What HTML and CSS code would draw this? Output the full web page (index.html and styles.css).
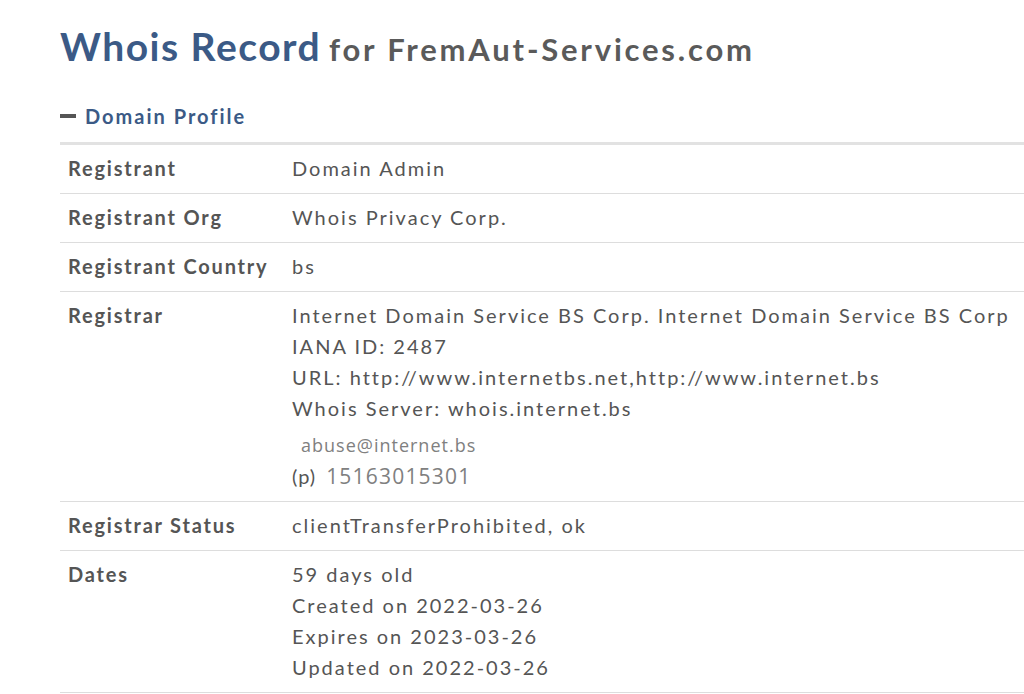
FILE: index.html
```html
<!DOCTYPE html>
<html lang="en">
<head>
<meta charset="utf-8">
<title>Whois Record for FremAut-Services.com</title>
<link rel="stylesheet" href="styles.css">
</head>
<body>
<div class="page">
  <h1 class="title"><span class="title-main">Whois Record</span> <span class="title-sub">for FremAut-Services.com</span></h1>
  <h2 class="section"><span class="minus"></span>Domain Profile</h2>
  <table class="profile">
    <tr><th>Registrant</th><td>Domain Admin</td></tr>
    <tr><th>Registrant Org</th><td>Whois Privacy Corp.</td></tr>
    <tr><th>Registrant Country</th><td>bs</td></tr>
    <tr><th>Registrar</th><td>
      <div>Internet Domain Service BS Corp. Internet Domain Service BS Corp</div>
      <div>IANA ID: 2487</div>
      <div>URL: http://www.internetbs.net,http://www.internet.bs</div>
      <div>Whois Server: whois.internet.bs</div>
      <div class="contact email">abuse@internet.bs</div>
      <div class="contact-row"><span class="p">(p)</span><span class="contact phone">15163015301</span></div>
    </td></tr>
    <tr><th>Registrar Status</th><td>clientTransferProhibited, ok</td></tr>
    <tr><th>Dates</th><td>
      <div>59 days old</div>
      <div>Created on 2022-03-26</div>
      <div>Expires on 2023-03-26</div>
      <div>Updated on 2022-03-26</div>
    </td></tr>
  </table>
</div>
</body>
</html>
```
FILE: styles.css
```css
html, body {
  margin: 0;
  padding: 0;
  background: #fff;
}
body {
  font-family: Lato, "Liberation Sans", sans-serif;
  color: #555;
}
.page {
  padding: 20px 0 0 60px;
}
.title {
  margin: 0;
  font-weight: 700;
  line-height: 52px;
  white-space: nowrap;
}
.title-main {
  font-size: 39px;
  letter-spacing: 1.5px;
  color: #3b5a86;
}
.title-sub {
  font-size: 31px;
  letter-spacing: 2.8px;
  color: #5a5a5a;
}
.section {
  margin: 29px 0 0 0;
  font-size: 20px;
  font-weight: 700;
  color: #3b5a86;
  letter-spacing: 2px;
  line-height: 24px;
  display: flex;
  align-items: center;
}
.minus {
  display: inline-block;
  width: 16px;
  height: 4px;
  background: #555;
  margin-right: 9px;
}
.profile {
  margin-top: 14px;
  width: calc(100% + 1px);
  border-collapse: collapse;
  border-top: 3px solid #e2e2e2;
  font-size: 20px;
  letter-spacing: 2px;
  line-height: 31px;
}
.profile tr {
  border-bottom: 1px solid #ddd;
}
.profile th {
  text-align: left;
  vertical-align: top;
  font-weight: 700;
  width: 208px;
  padding: 8px 8px 9px 8px;
  letter-spacing: 1.8px;
  color: #555;
  white-space: nowrap;
}
.profile td {
  vertical-align: top;
  padding: 8px 0 9px 8px;
  color: #555;
  white-space: nowrap;
}
.contact {
  font-family: "Open Sans", sans-serif;
  font-size: 18px;
  letter-spacing: 1px;
  color: #808080;
}
.email {
  padding-left: 9px;
  margin-top: 6px;
}
.p {
  color: #555;
  letter-spacing: 1px;
  margin-right: 10px;
}
.phone {
  font-size: 21px;
  letter-spacing: 1.2px;
}
```
